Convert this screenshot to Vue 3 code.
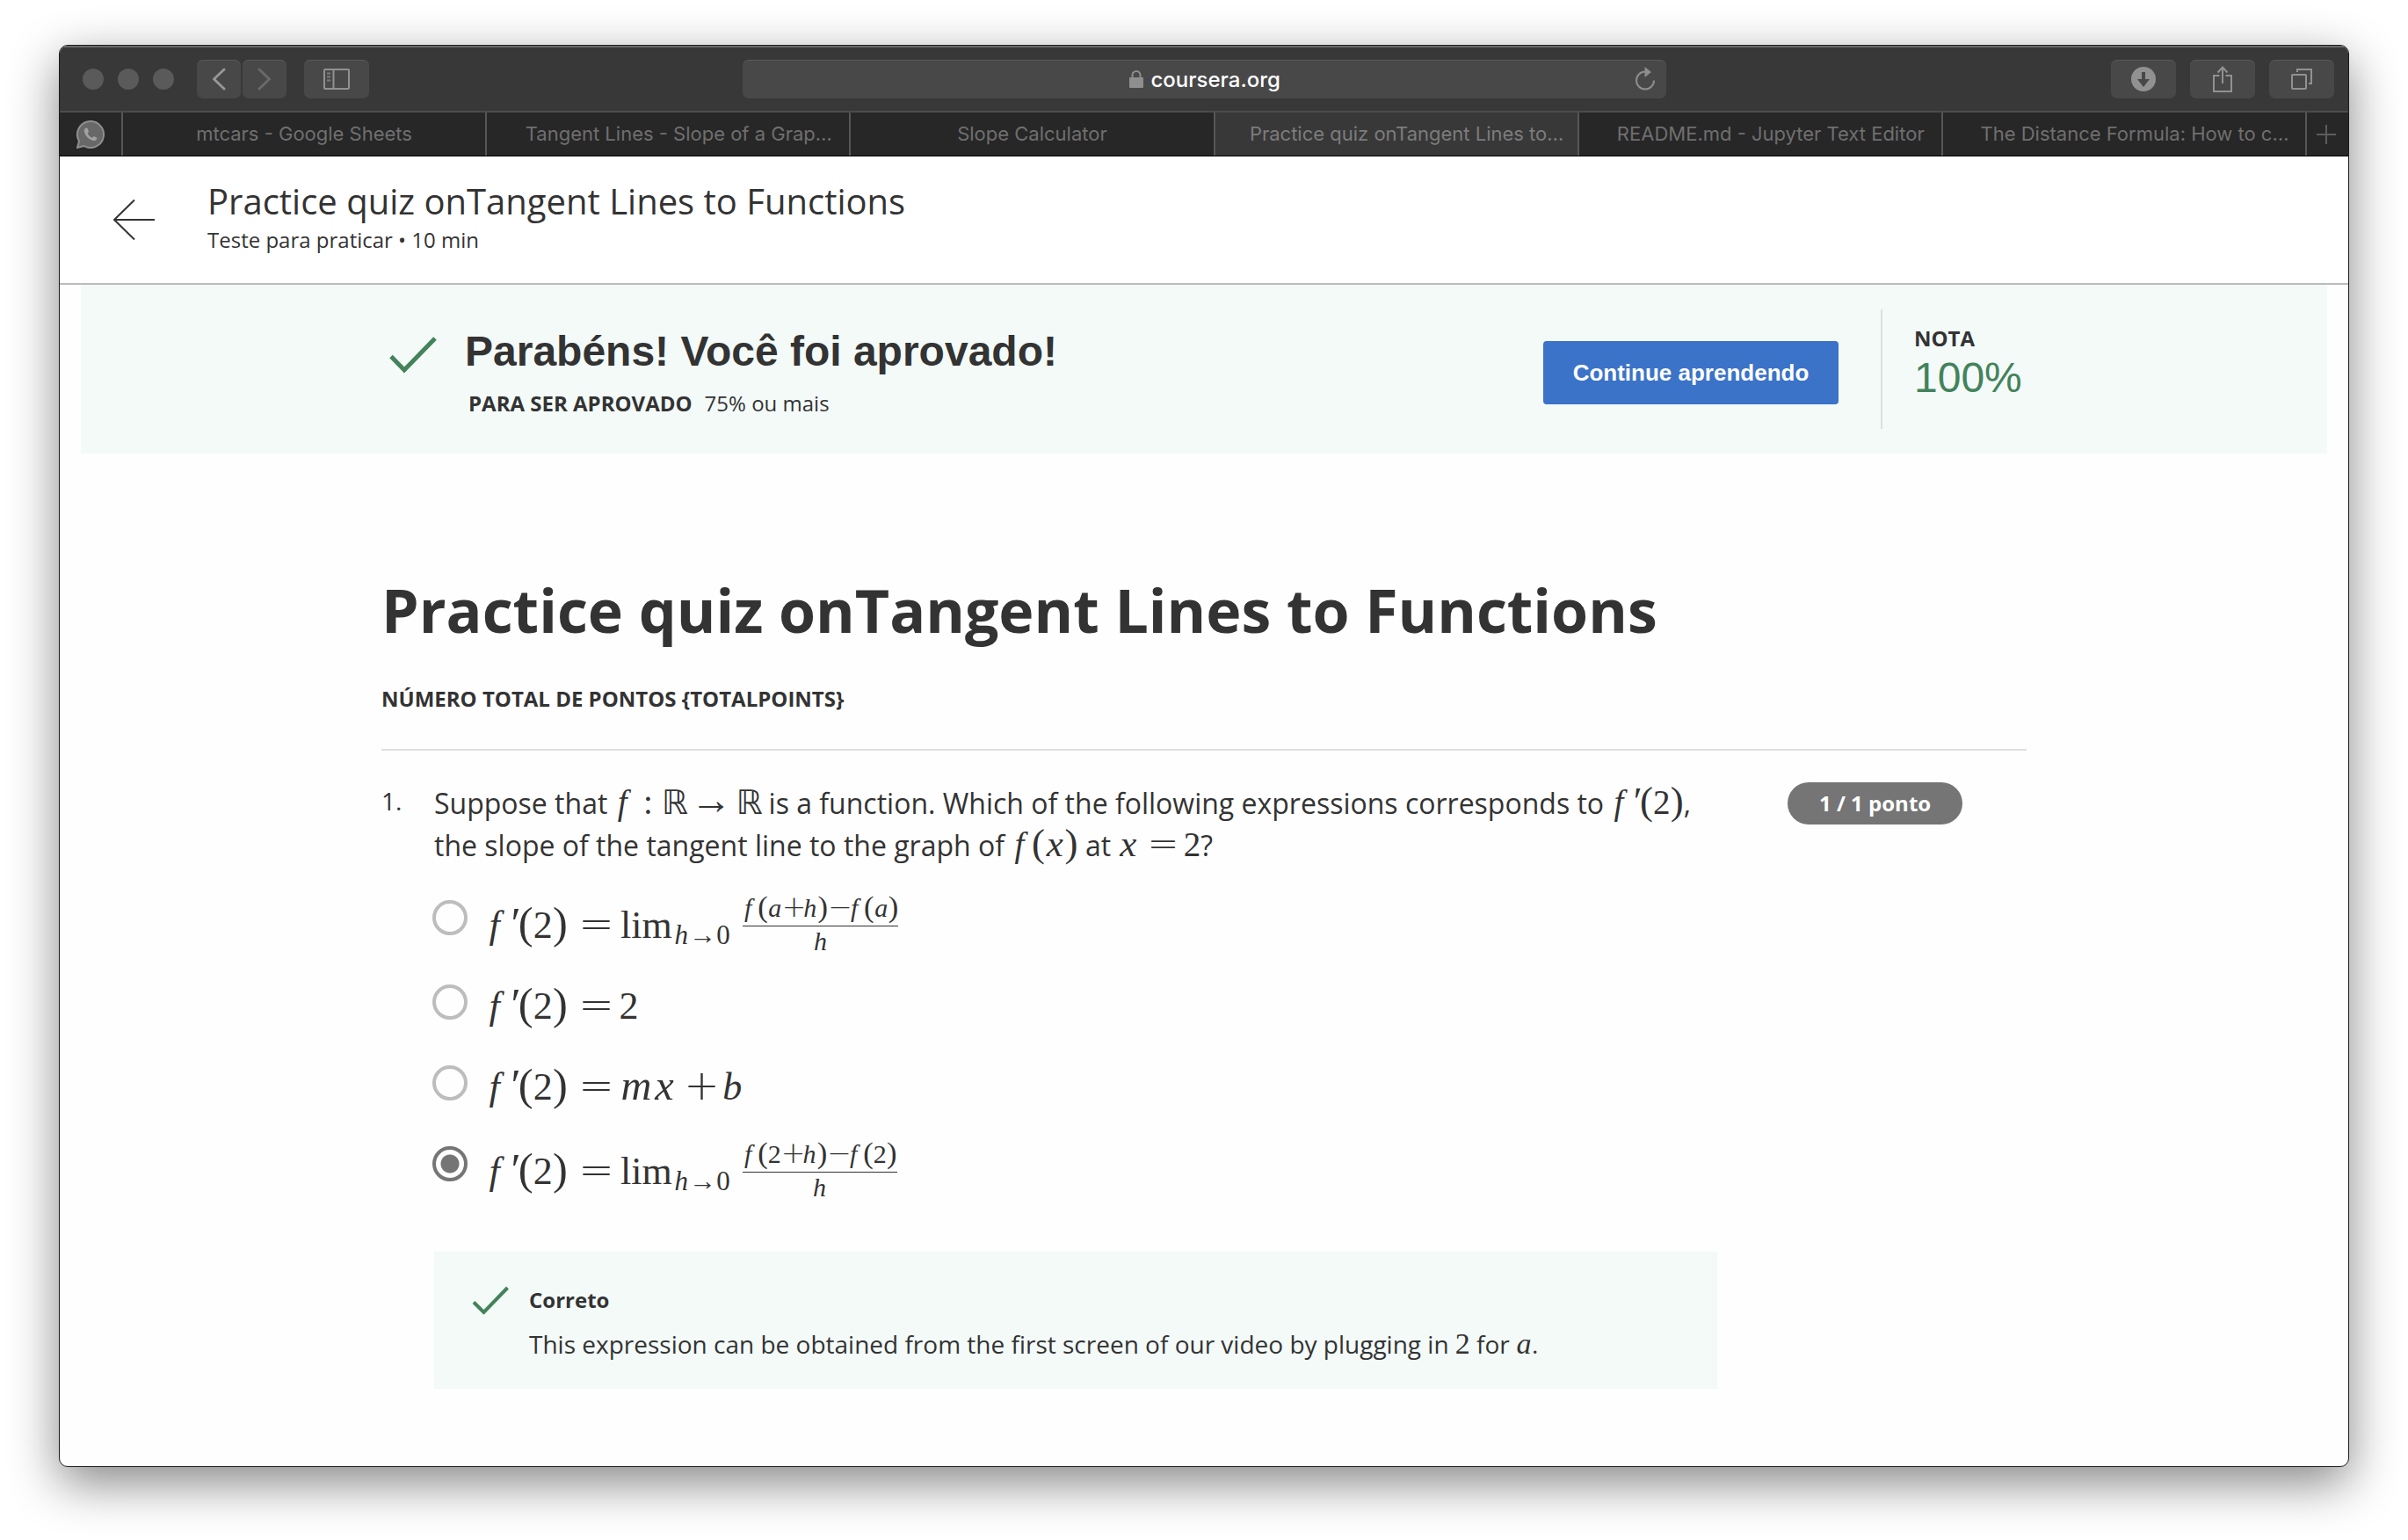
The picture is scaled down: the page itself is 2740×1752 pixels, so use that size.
<script setup>
import { ref } from 'vue'

const tabs = [
  { title: 'mtcars - Google Sheets' },
  { title: 'Tangent Lines - Slope of a Grap…', long: true },
  { title: 'Slope Calculator' },
  { title: 'Practice quiz onTangent Lines to…', long: true, active: true },
  { title: 'README.md - Jupyter Text Editor', long: true },
  { title: 'The Distance Formula: How to c…', long: true },
]

// Each formula is a list of [character, kind] atoms; the kind sets face and width.
const lhs = [['f', 'fn'], ['′', 'prime'], ['(', 'paren'], ['2', 'num'], [')', 'paren'], ['=', 'rel']]
const limit = [['h', 'h'], ['→', 'arrow'], ['0', 'num']]
const quotient = (at, kind) => [
  ['f', 'fn'], ['(', 'paren'], [at, kind], ['+', 'tight'], ['h', 'h'], [')', 'paren'],
  ['−', 'tight'], ['f', 'fn'], ['(', 'paren'], [at, kind], [')', 'paren'],
]

const options = [
  { id: 'a', atoms: lhs, limit, top: quotient('a', 'a'), bottom: [['h', 'h']] },
  { id: 'b', atoms: [...lhs, ['2', 'num']] },
  { id: 'c', atoms: [...lhs, ['m', 'm'], ['x', 'x'], ['+', 'bin'], ['b', 'b']] },
  { id: 'd', atoms: lhs, limit, top: quotient('2', 'num'), bottom: [['h', 'h']] },
]

const answer = ref('d')
const address = ref('coursera.org')
</script>

<template>
  <div class="window">
    <header class="toolbar">
      <div class="tools">
        <div class="lights"><i></i><i></i><i></i></div>
        <div class="history">
          <button class="tool narrow" aria-label="Back">
            <svg width="16" height="26" viewBox="0 0 16 26"><path d="M14 2 2.500 13 14 24" fill="none" stroke="#969696" stroke-width="3" stroke-linecap="round" stroke-linejoin="round" /></svg>
          </button>
          <button class="tool narrow" aria-label="Forward">
            <svg width="16" height="26" viewBox="0 0 16 26"><path d="M2 2 13.500 13 2 24" fill="none" stroke="#6a6a6a" stroke-width="3" stroke-linecap="round" stroke-linejoin="round" /></svg>
          </button>
        </div>
        <button class="tool" aria-label="Show sidebar">
          <svg width="30" height="24" viewBox="0 0 30 24" fill="none" stroke="#919191" stroke-width="2"><rect x="1" y="1" width="28" height="22" rx="1" /><path d="M11.500 1v22" /><path d="M4 5.500h4M4 9.500h4M4 13.500h4" stroke="#7c7c7c" /></svg>
        </button>
      </div>
      <div class="address">
        <label class="site">
          <svg width="16" height="22" viewBox="0 0 16 22"><path d="M3.500 10V6.500a4.500 4.500 0 0 1 9 0V10" fill="none" stroke="#8e8e8e" stroke-width="2" /><rect y="9" width="16" height="12" rx="1" fill="#8e8e8e" /></svg>
          <input v-model="address" type="text" aria-label="Address" />
        </label>
        <button class="reload" aria-label="Reload">
          <svg width="24" height="28" viewBox="0 0 24 28"><path d="M12 5.500A10 10 0 1 0 22 15.500" fill="none" stroke="#8e8e8e" stroke-width="2" /><path d="M11.500 0 19 6l-7.500 6z" fill="#8e8e8e" /></svg>
        </button>
      </div>
      <div class="tools end">
        <button class="tool" aria-label="Downloads">
          <svg width="28" height="28" viewBox="0 0 28 28"><circle cx="14" cy="14" r="14" fill="#919191" /><path d="M12 6h4v8h5l-7 9-7-9h5z" fill="#484848" /></svg>
        </button>
        <button class="tool" aria-label="Share">
          <svg width="24" height="32" viewBox="0 0 24 32" fill="none" stroke="#919191" stroke-width="2"><path d="M8.500 12H2v18h20V12h-6.500M12 21V3M6.500 8.500 12 2.500l5.500 6" /></svg>
        </button>
        <button class="tool" aria-label="Show all tabs">
          <svg width="24" height="24" viewBox="0 0 24 24" fill="none" stroke="#919191" stroke-width="2"><rect x="1" y="7" width="16" height="16" rx="1" /><path d="M7 4V1h16v16h-3" /></svg>
        </button>
      </div>
    </header>

    <nav class="tabs">
      <a class="pinned" href="#" aria-label="WhatsApp">
        <svg width="32" height="32" viewBox="0 0 32 32"><path d="M1 31 3 23.500A15 15 0 1 1 8.500 29z" fill="#686868" stroke="#8f8f8f" stroke-width="2" /><path d="M11 8.500c-2 .8-2.600 2.600-2 4.800 1.200 4.300 4.800 8.200 9.300 9.500 2.600.7 4.700-.3 5.200-2.900l-3.700-2-1.900 1.800c-2.300-.9-4.200-2.700-5.300-5l1.400-2-1.600-4z" fill="#a2a2a2" /></svg>
      </a>
      <a v-for="tab in tabs" :key="tab.title" href="#" class="tab" :class="{ long: tab.long, active: tab.active }">{{ tab.title }}</a>
      <button class="new-tab" aria-label="New tab">
        <svg width="22" height="22" viewBox="0 0 22 22"><path d="M11 0v22M0 11h22" stroke="#5c5c5c" stroke-width="2" /></svg>
      </button>
    </nav>

    <section class="lesson">
      <button class="back" aria-label="Voltar">
        <svg width="48" height="48" viewBox="0 0 48 48"><path d="M25 1.500 2 24l23 22.500M2 24h46" fill="none" stroke="#333" stroke-width="2" /></svg>
      </button>
      <div class="lesson-text">
        <h2>Practice quiz onTangent Lines to Functions</h2>
        <p>Teste para praticar • 10 min</p>
      </div>
    </section>

    <section class="banner">
      <div class="column banner-row">
        <div class="tick">
          <svg width="54" height="42" viewBox="0 0 54 42"><path d="M2 22.500 17 38 52 2" fill="none" stroke="#43825b" stroke-width="5" /></svg>
        </div>
        <div class="result">
          <h3>Parabéns! Você foi aprovado!</h3>
          <p><b>PARA SER APROVADO</b><span>75% ou mais</span></p>
        </div>
        <button class="continue">Continue aprendendo</button>
        <div class="score">
          <b>NOTA</b>
          <span>100%</span>
        </div>
      </div>
    </section>

    <main class="column quiz">
      <h1>Practice quiz onTangent Lines to Functions</h1>
      <p class="total">NÚMERO TOTAL DE PONTOS {TOTALPOINTS}</p>

      <div class="question">
        <div class="number">1.</div>
        <div class="body">
          <p id="prompt" class="prompt">Suppose that <span class="math"><i class="fn">f</i><i class="rel colon">:</i><i class="bb">ℝ</i><i class="rel arrow">→</i><i class="bb">ℝ</i></span> is a function. Which of the following expressions corresponds to <span class="math"><i class="fn">f</i><i class="prime">′</i><i class="paren">(</i><i class="num">2</i><i class="paren">)</i></span><span>,</span> <span>the slope of the tangent line to the graph of</span> <span class="math"><i class="fn">f</i><i class="paren">(</i><i class="x">x</i><i class="paren">)</i></span> at <span class="math"><i class="x">x</i><i class="rel">=</i><i class="num">2</i></span>?</p>

          <div class="options" role="radiogroup" aria-labelledby="prompt">
            <label v-for="option in options" :key="option.id" class="option">
              <input v-model="answer" type="radio" name="answer" :value="option.id" />
              <span class="math">
                <i v-for="([char, kind], n) in option.atoms" :key="n" :class="kind">{{ char }}</i>
                <template v-if="option.limit">
                  <i class="lim">lim</i>
                  <span class="sub"><i v-for="([char, kind], n) in option.limit" :key="n" :class="kind">{{ char }}</i></span>
                  <span class="frac">
                    <span class="top"><i v-for="([char, kind], n) in option.top" :key="n" :class="kind">{{ char }}</i></span>
                    <span class="bottom"><i v-for="([char, kind], n) in option.bottom" :key="n" :class="kind">{{ char }}</i></span>
                  </span>
                </template>
              </span>
            </label>
          </div>

          <div class="feedback">
            <svg width="42" height="34" viewBox="0 0 42 34"><path d="M2 18.500 13.500 30 40.500 2" fill="none" stroke="#43825b" stroke-width="4" /></svg>
            <div>
              <h4>Correto</h4>
              <p>This expression can be obtained from the first screen of our video by plugging in <span class="math"><i class="num">2</i></span> for <span class="math"><i class="a">a</i></span>.</p>
            </div>
          </div>
        </div>
        <div class="side"><span class="points">1 / 1 ponto</span></div>
      </div>
    </main>
  </div>
</template>

<style>
body {
  background: #fff;
}
</style>

<style scoped>
.window {
  box-sizing: border-box;
  margin: 51px 67px 83px;
  min-height: calc(100vh - 134px);
  border: 1px solid #1c1c1c;
  border-radius: 10px;
  background: #fefefe;
  overflow: hidden;
  box-shadow: 0 18px 56px rgba(0, 0, 0, 0.48);
  color: #333;
  font-family: "Open Sans", sans-serif;
}
h1, h2, h3, h4, p {
  margin: 0;
}
button {
  border: 0;
  padding: 0;
  background: none;
  font: inherit;
  color: inherit;
}
svg {
  display: block;
}

/* Browser chrome */
.toolbar {
  display: grid;
  grid-template-columns: 1fr minmax(0, 1051px) 1fr;
  align-items: center;
  height: 72px;
  padding: 0 16px;
  border-top: 2px solid #6a6a6a;
  border-bottom: 2px solid #4d4d4d;
  background: #383838;
}
.tools {
  display: flex;
  align-items: center;
  margin-left: 10px;
}
.tools.end {
  justify-content: flex-end;
  gap: 16px;
}
.lights {
  display: flex;
  gap: 16px;
  margin-right: 26px;
}
.lights i {
  width: 24px;
  height: 24px;
  border-radius: 50%;
  background: #5a5a5a;
}
.history {
  display: flex;
  gap: 2px;
  margin-right: 20px;
}
.tool {
  display: flex;
  align-items: center;
  justify-content: center;
  width: 74px;
  height: 44px;
  border-radius: 7px;
  background: #484848;
  box-shadow: inset 0 1px #585858;
}
.tool.narrow {
  width: 50px;
}
.address {
  display: flex;
  align-items: center;
  height: 44px;
  padding: 0 12px 0 36px;
  border-radius: 7px;
  background: #484848;
  box-shadow: inset 0 1px #585858;
}
.site {
  display: flex;
  flex: 1;
  align-items: center;
  justify-content: center;
  gap: 9px;
}
.site input {
  width: 146px;
  border: 0;
  padding: 2px 0 0;
  background: none;
  color: #fff;
  font: 500 24px/32px Inter, sans-serif;
}
.tabs {
  display: flex;
  height: 49px;
  border-bottom: 1px solid #000;
  background: #272727;
}
.pinned {
  display: flex;
  align-items: center;
  padding: 0 19px;
}
.tab {
  box-sizing: border-box;
  flex: 1 1 0;
  min-width: 0;
  overflow: hidden;
  border-left: 2px solid #565656;
  color: #6f6f6f;
  font: 22px/49px Inter, sans-serif;
  text-align: center;
  text-decoration: none;
  white-space: nowrap;
}
.tab.long {
  text-indent: 24px;
}
.tab.active {
  background: #383838;
  color: #7c7c7c;
}
.new-tab {
  display: flex;
  align-items: center;
  padding: 0 14px 0 11px;
  border-left: 2px solid #565656;
}

/* Lesson header */
.lesson {
  display: flex;
  align-items: center;
  height: 144px;
  padding: 0 60px;
  border-bottom: 2px solid #bbb;
  background: #fff;
}
.lesson-text {
  padding: 0 0 8px 60px;
}
.lesson h2 {
  font-size: 40px;
  font-weight: 400;
  line-height: 54px;
}
.lesson p {
  font-size: 24px;
  line-height: 34px;
}

/* Result banner */
.column {
  max-width: 1872px;
  margin: 0 auto;
}
.banner {
  margin: 0 24px;
  padding: 28px 0;
  background: #f3faf8;
}
.banner-row {
  display: flex;
  align-items: flex-start;
}
.tick {
  flex: none;
  width: 86px;
  padding: 31px 0 0 9px;
}
.result {
  flex: 1;
  padding-top: 20px;
}
.result h3 {
  font: 700 48px/56px "Liberation Sans", Arial, sans-serif;
}
.result p {
  display: flex;
  gap: 14px;
  margin-top: 15px;
  padding-left: 4px;
  font-size: 24px;
  line-height: 32px;
}
.continue {
  width: 336px;
  height: 72px;
  margin: 36px 48px 0 0;
  border-radius: 4px;
  background: #3a73c8;
  color: #fff;
  font: 700 26px/32px "Liberation Sans", Arial, sans-serif;
}
.score {
  box-sizing: border-box;
  display: flex;
  flex-direction: column;
  width: 166px;
  height: 136px;
  padding: 17px 0 0 36px;
  border-left: 2px solid #dcdfde;
}
.score b {
  font-size: 24px;
  line-height: 32px;
}
.score span {
  color: #43825b;
  font: 48px/58px "Liberation Sans", Arial, sans-serif;
}

/* Quiz */
.quiz {
  padding: 132px 0 86px;
}
.quiz h1 {
  font-size: 68px;
  line-height: 92px;
}
.total {
  margin-top: 39px;
  padding-bottom: 41px;
  border-bottom: 2px solid #dfdfdf;
  font-size: 24px;
  font-weight: 700;
  line-height: 32px;
}
.question {
  display: flex;
  align-items: flex-start;
  margin-top: 36px;
}
.number {
  flex: none;
  width: 60px;
  font-size: 28px;
  line-height: 42px;
}
.body {
  flex: 1;
  min-width: 0;
}
.side {
  flex: none;
  box-sizing: border-box;
  width: 352px;
  padding-left: 80px;
}
.points {
  display: inline-block;
  padding: 0 36px;
  border-radius: 24px;
  background: #757575;
  color: #fff;
  font-size: 24px;
  font-weight: 700;
  line-height: 48px;
}
.prompt {
  font-size: 32px;
  line-height: 48px;
}
.prompt .math {
  font-size: 39px;
}
.options {
  display: flex;
  flex-direction: column;
  gap: 42px;
  margin: 38px 0 66px -2px;
}
.option {
  display: flex;
  align-items: flex-start;
  gap: 21px;
}
.option input {
  appearance: none;
  box-sizing: border-box;
  flex: none;
  width: 40px;
  height: 40px;
  margin: 0;
  border: 4px solid #bdbdbd;
  border-radius: 50%;
}
.option input:checked {
  border-color: #757575;
  background: radial-gradient(circle, #757575 10px, transparent 11px);
}
.option .math {
  display: block;
  font-size: 44px;
  line-height: 50px;
}
.feedback {
  display: flex;
  gap: 23px;
  padding: 39px 43px 31px;
  background: #f3faf8;
}
.feedback h4 {
  font-size: 24px;
  line-height: 32px;
}
.feedback p {
  margin-top: 14px;
  font-size: 28px;
  line-height: 40px;
}
.feedback .math {
  font-size: 34px;
}

/* Maths: every atom is a box of its own width, sharing one baseline */
.math {
  font-family: "Liberation Serif", "Times New Roman", serif;
  line-height: 0;
  white-space: nowrap;
}
.math i {
  display: inline-block;
  font-style: normal;
  line-height: 0;
  text-align: center;
}
.math .fn, .math .x, .math .a, .math .h, .math .m, .math .b {
  font-style: italic;
}
.math .fn {
  width: 0.58em;
  text-align: left;
  text-indent: 0.08em;
}
.math .prime { width: 0.22em; font-size: 1.15em; font-style: italic; text-align: left; }
.math .paren { width: 0.34em; font-size: 1.15em; text-indent: 0; }
.math .num { width: 0.5em; }
.math .x { width: 0.52em; font-size: 1.1em; }
.math .a { width: 0.53em; }
.math .h { width: 0.58em; }
.math .m { width: 0.8em; font-size: 1.1em; }
.math .b { width: 0.43em; }
.math .bb { width: 0.76em; font-family: "DejaVu Sans", sans-serif; font-size: 0.97em; }
.math .lim { width: 1.4em; }
.math .rel, .math .bin, .math .tight {
  width: 0.71em;
  font-family: "DejaVu Sans Light", "DejaVu Sans", sans-serif;
  font-size: 1.1em;
  font-weight: 200;
}
.math .rel { margin: 0 0.25em; }
.math .bin { margin: 0 0.2em; }
.math .arrow {
  width: 1em;
  font-family: inherit;
  font-size: 1em;
}
.math .rel.arrow {
  margin: 0 0.1em;
  font-size: 1.2em;
}
.math .colon {
  width: 0.28em;
  font-family: inherit;
  font-size: 1em;
}
.sub {
  font-size: 31px;
  line-height: 0;
  vertical-align: -7px;
}
.frac {
  display: inline-flex;
  flex-direction: column;
  align-items: center;
  margin: 0 0 -6px 14px;
  font-size: 30px;
  line-height: 18px;
  vertical-align: 24px;
}
.frac .bottom {
  align-self: stretch;
  margin-top: 11px;
  padding-top: 8px;
  border-top: 1px solid #333;
  text-align: center;
}
</style>
